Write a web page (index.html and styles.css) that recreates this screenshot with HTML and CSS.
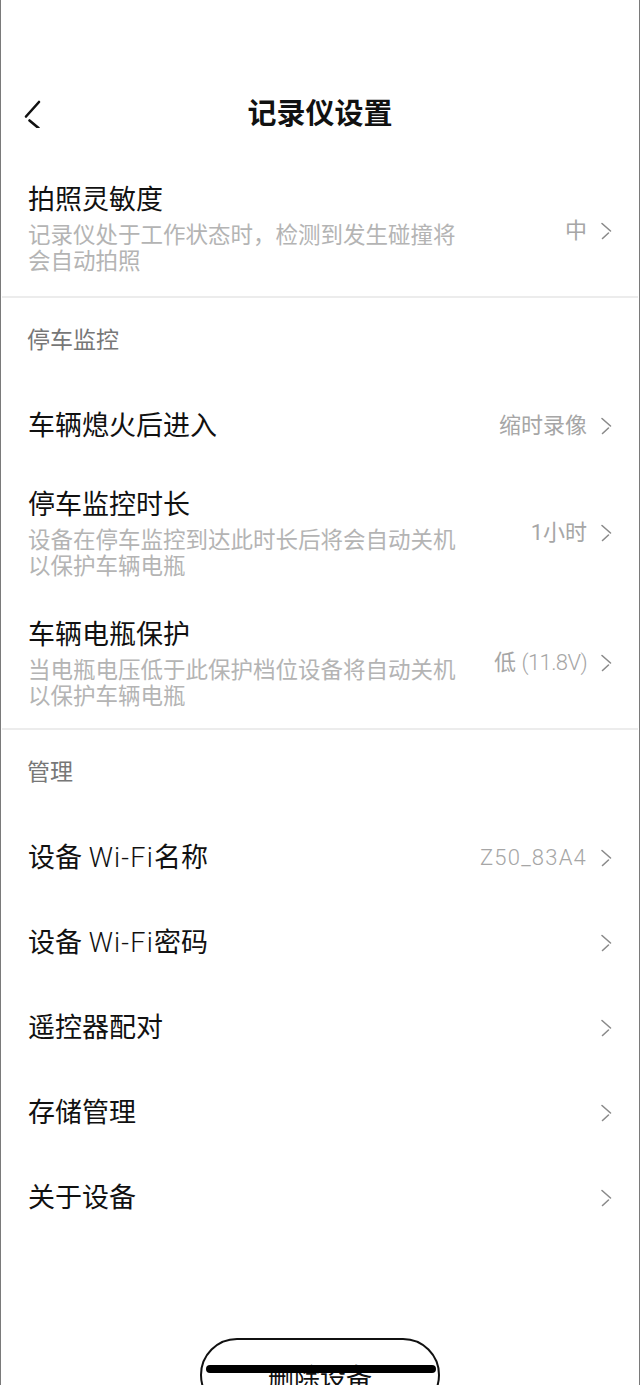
FILE: index.html
```html
<!DOCTYPE html>
<html lang="zh-CN">
<head>
    <meta charset="UTF-8">
    <meta name="viewport" content="width=device-width, initial-scale=1.0">
    <title>记录仪设置</title>
    <link rel="stylesheet" href="styles.css">
</head>
<body>
    <div class="screen">
        <div class="status-space"></div>

        <header class="nav">
            <svg class="nav-back" width="24" height="32" viewBox="0 0 24 32">
                <path d="M16 6 L3 20.5" />
                <path d="M6.5 24.5 L15.5 32" />
            </svg>
            <h1 class="nav-title">记录仪设置</h1>
        </header>

        <div class="row row-sub row-first">
            <div class="row-main">
                <div class="row-title">拍照灵敏度</div>
                <div class="row-desc">记录仪处于工作状态时，检测到发生碰撞将会自动拍照</div>
            </div>
            <span class="row-value">中</span>
            <svg class="chev" width="12" height="18" viewBox="0 0 12 18"><path d="M2 1.5 L10.5 9" /><path d="M8.5 11 L2.5 16.5" /></svg>
        </div>

        <div class="divider"></div>

        <div class="section">停车监控</div>

        <div class="row">
            <div class="row-title">车辆熄火后进入</div>
            <span class="row-value">缩时录像</span>
            <svg class="chev" width="12" height="18" viewBox="0 0 12 18"><path d="M2 1.5 L10.5 9" /><path d="M8.5 11 L2.5 16.5" /></svg>
        </div>

        <div class="row row-sub">
            <div class="row-main">
                <div class="row-title">停车监控时长</div>
                <div class="row-desc">设备在停车监控到达此时长后将会自动关机以保护车辆电瓶</div>
            </div>
            <span class="row-value">1小时</span>
            <svg class="chev" width="12" height="18" viewBox="0 0 12 18"><path d="M2 1.5 L10.5 9" /><path d="M8.5 11 L2.5 16.5" /></svg>
        </div>

        <div class="row row-sub">
            <div class="row-main">
                <div class="row-title">车辆电瓶保护</div>
                <div class="row-desc">当电瓶电压低于此保护档位设备将自动关机以保护车辆电瓶</div>
            </div>
            <span class="row-value">低 <span class="narrow">(11.8V)</span></span>
            <svg class="chev" width="12" height="18" viewBox="0 0 12 18"><path d="M2 1.5 L10.5 9" /><path d="M8.5 11 L2.5 16.5" /></svg>
        </div>

        <div class="divider"></div>

        <div class="section">管理</div>

        <div class="row">
            <div class="row-title">设备 <span class="latin">Wi-Fi</span>名称</div>
            <span class="row-value latin">Z50_83A4</span>
            <svg class="chev" width="12" height="18" viewBox="0 0 12 18"><path d="M2 1.5 L10.5 9" /><path d="M8.5 11 L2.5 16.5" /></svg>
        </div>

        <div class="row">
            <div class="row-title">设备 <span class="latin">Wi-Fi</span>密码</div>
            <svg class="chev" width="12" height="18" viewBox="0 0 12 18"><path d="M2 1.5 L10.5 9" /><path d="M8.5 11 L2.5 16.5" /></svg>
        </div>

        <div class="row">
            <div class="row-title">遥控器配对</div>
            <svg class="chev" width="12" height="18" viewBox="0 0 12 18"><path d="M2 1.5 L10.5 9" /><path d="M8.5 11 L2.5 16.5" /></svg>
        </div>

        <div class="row">
            <div class="row-title">存储管理</div>
            <svg class="chev" width="12" height="18" viewBox="0 0 12 18"><path d="M2 1.5 L10.5 9" /><path d="M8.5 11 L2.5 16.5" /></svg>
        </div>

        <div class="row">
            <div class="row-title">关于设备</div>
            <svg class="chev" width="12" height="18" viewBox="0 0 12 18"><path d="M2 1.5 L10.5 9" /><path d="M8.5 11 L2.5 16.5" /></svg>
        </div>

        <div class="footer">
            <button class="delete-btn">删除设备</button>
        </div>

        <div class="home-bar"></div>
    </div>
</body>
</html>
```

FILE: styles.css
```css
html, body {
    margin: 0;
    padding: 0;
    background: #fff;
}
body {
    font-family: Roboto, "Noto Sans CJK SC", sans-serif;
    color: #111;
}
.screen {
    position: relative;
    width: 640px;
    height: 1385px;
    box-sizing: border-box;
    border-left: 1px solid #7a7a7a;
    border-right: 1px solid #7a7a7a;
    overflow: hidden;
}
.status-space {
    height: 70px;
}
.nav {
    position: relative;
    height: 86px;
    box-sizing: border-box;
    padding-bottom: 4px;
    display: flex;
    align-items: center;
    justify-content: center;
}
.nav-back {
    position: absolute;
    left: 22px;
    top: 26px;
    fill: none;
    stroke: #111;
    stroke-width: 2.6;
    stroke-linecap: round;
}
.nav-title {
    margin: 0;
    font-family: "Noto Sans CJK SC", sans-serif;
    font-size: 29px;
    font-weight: 700;
    line-height: 36px;
    color: #111;
}
.row {
    display: flex;
    align-items: center;
    height: 85px;
    padding: 0 27px 0 27px;
}
.row-sub {
    height: auto;
    padding-top: 19px;
    padding-bottom: 19px;
}
.row-first {
    padding-top: 26px;
    padding-bottom: 22px;
}
.row-first .row-value,
.row-first .chev {
    margin-top: 6px;
}
.row-main {
    display: flex;
    flex-direction: column;
    gap: 4px;
}
.row-title {
    font-size: 27px;
    line-height: 36px;
    color: #111;
}
.row-desc {
    max-width: 440px;
    font-size: 22.5px;
    line-height: 26px;
    color: #b4b4b4;
}
.row-value {
    margin-left: auto;
    font-size: 22px;
    line-height: 30px;
    color: #a6a6a6;
}
.latin {
    font-weight: 300;
    letter-spacing: 1.2px;
}
.narrow {
    font-weight: 300;
    letter-spacing: -0.6px;
}
.chev {
    flex: none;
    margin-left: 13px;
    fill: none;
    stroke: #8a8a8a;
    stroke-width: 1.6;
    stroke-linecap: round;
}
.row-title + .chev {
    margin-left: auto;
}
.divider {
    height: 2px;
    background: #ececec;
    margin: 0 1px;
}
.section {
    height: 85px;
    box-sizing: border-box;
    padding: 0 0 5px 26px;
    display: flex;
    align-items: center;
    font-size: 23px;
    color: #777;
}
.footer {
    display: flex;
    justify-content: center;
    padding-top: 98px;
}
.delete-btn {
    width: 240px;
    height: 74px;
    border: 2px solid #111;
    border-radius: 37px;
    background: #fff;
    font-family: "Noto Sans CJK SC", sans-serif;
    font-size: 26px;
    color: #111;
    padding: 0;
}
.home-bar {
    position: absolute;
    left: 205px;
    top: 1365px;
    width: 230px;
    height: 8px;
    border-radius: 4px;
    background: #000;
}
```
